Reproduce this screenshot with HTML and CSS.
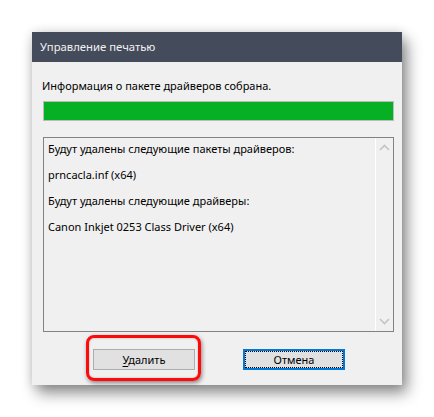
FILE: index.html
```html
<!DOCTYPE html>
<html lang="ru">
<head>
<meta charset="utf-8">
<link rel="stylesheet" href="styles.css">
</head>
<body>
<div class="stage">
  <div class="dialog">
    <div class="titlebar">Управление печатью</div>
    <div class="content">
      <div class="info">Информация о пакете драйверов собрана.</div>
      <div class="progress"><div class="progress-fill"></div></div>
      <div class="listbox">
        <div class="list-text">
          <p>Будут удалены следующие пакеты драйверов:</p>
          <p>prncacla.inf (x64)</p>
          <p>Будут удалены следующие драйверы:</p>
          <p>Canon Inkjet 0253 Class Driver (x64)</p>
        </div>
        <div class="scrollbar">
          <svg class="arrow" width="11" height="7" viewBox="0 0 11 7"><path d="M1 6 L5.5 1.5 L10 6" fill="none" stroke="#c4c4c4" stroke-width="1.6"/></svg>
          <svg class="arrow" width="11" height="7" viewBox="0 0 11 7"><path d="M1 1 L5.5 5.5 L10 1" fill="none" stroke="#c4c4c4" stroke-width="1.6"/></svg>
        </div>
      </div>
      <div class="buttons">
        <div class="highlight">
          <button class="btn"><u>У</u>далить</button>
        </div>
        <button class="btn btn-default">Отмена</button>
      </div>
    </div>
  </div>
</div>
</body>
</html>
```

FILE: styles.css
```css
html, body {
  margin: 0;
  padding: 0;
  background: #ffffff;
}
body {
  font-family: "Noto Sans", "Open Sans", sans-serif;
  font-size: 11px;
  color: #000;
}
.stage {
  padding: 32px 0 0 32px;
  height: 417px;
  box-sizing: border-box;
}
.dialog {
  width: 370px;
  height: 353px;
  background: #f0f0f0;
  display: flex;
  flex-direction: column;
  box-shadow: 5px 8px 14px rgba(0, 0, 0, 0.45), 0 0 10px rgba(0, 0, 0, 0.12);
}
.titlebar {
  height: 30px;
  flex: none;
  background: #444b5b;
  color: #f2f2f2;
  line-height: 30px;
  padding-left: 8px;
  font-size: 11.3px;
}
.content {
  flex: 1;
  display: flex;
  flex-direction: column;
  padding: 16px 8px 0 11px;
}
.info {
  height: 16px;
  line-height: 16px;
  margin-left: -1px;
}
.progress {
  margin-top: 7px;
  height: 20px;
  border: 1px solid #bcbcbc;
  box-sizing: border-box;
  background: #e6e6e6;
}
.progress-fill {
  height: 100%;
  width: 100%;
  background: #06b025;
}
.listbox {
  margin-top: 16px;
  height: 195px;
  box-sizing: border-box;
  border: 1px solid #828282;
  display: flex;
  background: #f0f0f0;
}
.list-text {
  flex: 1;
  padding: 3px 0 0 4px;
}
.list-text p {
  margin: 0 0 10px 0;
  height: 16px;
  line-height: 16px;
  white-space: nowrap;
}
.scrollbar {
  width: 17px;
  flex: none;
  border-left: 1px solid #ffffff;
  display: flex;
  flex-direction: column;
  justify-content: space-between;
  align-items: center;
  padding: 6px 0 6px;
}
.arrow {
  display: block;
}
.buttons {
  display: flex;
  gap: 48px;
  margin-top: 17px;
  padding-left: 50px;
}
.highlight {
  position: relative;
}
.highlight::before {
  content: "";
  position: absolute;
  left: -7px;
  top: -14px;
  right: -6px;
  bottom: -11px;
  border: 3px solid #ff0a0a;
  border-radius: 8px;
  box-shadow: 1px 2px 4px rgba(0, 0, 0, 0.45), inset 0 0 2px rgba(0, 0, 0, 0.3);
  pointer-events: none;
}
.btn {
  width: 102px;
  height: 21px;
  margin: 0;
  padding: 0;
  box-sizing: border-box;
  border: 1px solid #adadad;
  background: #e1e1e1;
  font-family: inherit;
  font-size: 11px;
  color: #000;
  line-height: 17px;
  display: block;
}
.btn u {
  text-decoration: underline;
  text-underline-offset: 2px;
}
.btn-default {
  border: 2px solid #0078d7;
  outline: 1px dotted #000;
  outline-offset: -3px;
}
```
